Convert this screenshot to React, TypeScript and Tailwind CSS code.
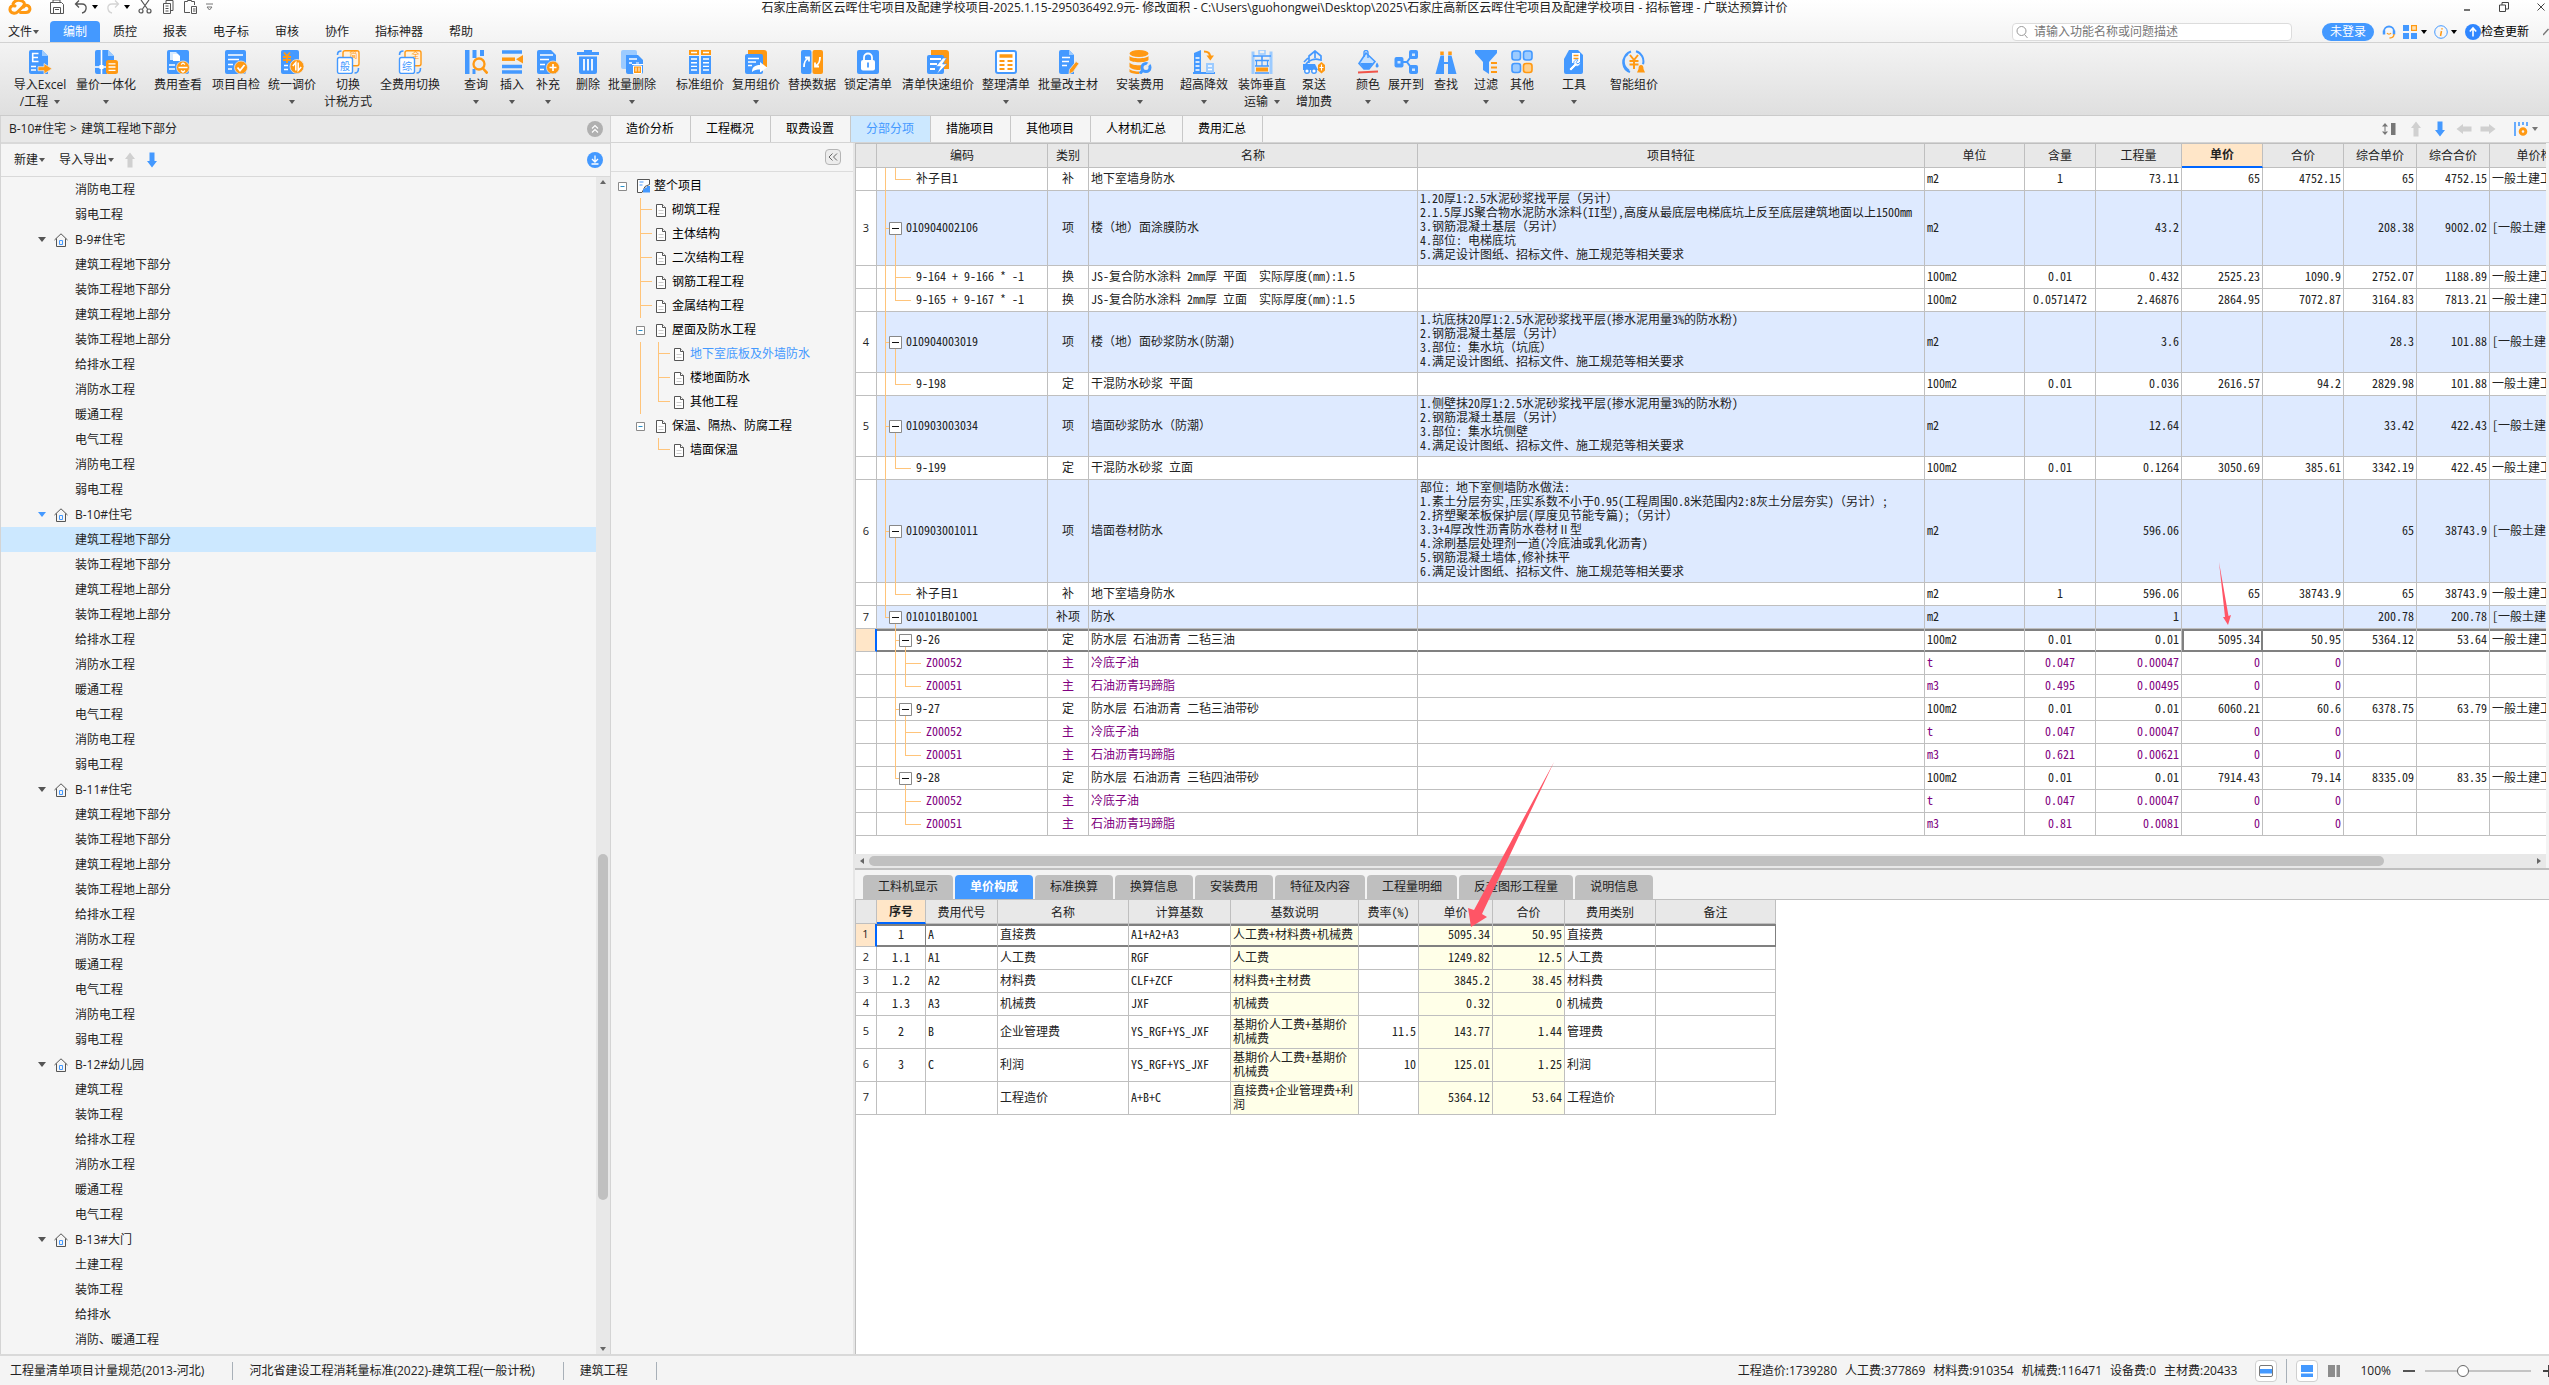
import type { ReactNode } from 'react'
import clsx from 'clsx'

const B = '#4499ff'
const O = '#ff9913'
const L = '#9ccbff'

const UI_FONT = "font-['Open_Sans','Noto_Sans_CJK_SC',sans-serif]"
const GRID_FONT = "font-['Noto_Sans_Mono_CJK_SC','Noto_Sans_CJK_SC',monospace]"

function Caret({ className = 'text-[#555]' }: { className?: string }) {
  return (
    <svg viewBox="0 0 6 4" className={clsx('w-1.5 h-1 shrink-0', className)} fill="currentColor">
      <path d="M0 0h6L3 4z" />
    </svg>
  )
}

function Arrow({ dir, color }: { dir: 'up' | 'down' | 'left' | 'right'; color: string }) {
  const rotate = { up: 0, right: 90, down: 180, left: 270 }[dir]
  return (
    <svg viewBox="0 0 16 16" className="w-4 h-4 shrink-0" fill={color}>
      <path d="M8 0.5 L13 7 H10.5 V15.5 H5.5 V7 H3z" transform={`rotate(${rotate} 8 8)`} />
    </svg>
  )
}

/* ---------- Toolbar icons ---------- */

const blueDoc = <path d="M3 0h12l5 5v19H3a2 2 0 0 1-2-2V2a2 2 0 0 1 2-2z" fill={B} />

const ICONS: Record<string, ReactNode> = {
  excel: (
    <>
      <path d="M3 0h11l6 6v18H3a2 2 0 0 1-2-2V2a2 2 0 0 1 2-2z" fill={B} />
      <path d="M14 0l6 6h-6z" fill={L} />
      <path d="M4 3.500h6.500M4 7.500h6M4 11.500h6.500M4.700 3v9" stroke="#fff" strokeWidth="1.600" />
      <path d="M3 16.500h5M3 20h5" stroke="#fff" strokeWidth="1.500" />
      <path d="M10 16.700h6v-3.200l8 5.200-8 5.200v-3.200h-6z" fill={O} stroke="#e6e6e6" strokeWidth="0.800" />
    </>
  ),
  merge: (
    <>
      <path d="M3 0h11l6 6v5h-7v13H3a2 2 0 0 1-2-2V2a2 2 0 0 1 2-2z" fill={B} />
      <path d="M14 0l6 6h-6z" fill={L} />
      <path d="M7.500 0v24M1 17h11" stroke="#fff" strokeWidth="1.600" />
      <path d="M5.500 15h4v4h-4z" fill="#fff" />
      <rect x="12" y="10" width="12" height="14" rx="2.500" fill={O} />
      <path d="M14.500 13.800h7M14.500 17h7M14.500 20.300h7" stroke="#fff" strokeWidth="1.300" />
    </>
  ),
  feeView: (
    <>
      <rect x="1" width="22" height="24" rx="2" fill={B} />
      <path d="M4 2h6l2 2v6H4z" fill="#d7eaff" />
      <path d="M7 4h5l2 2v5H7z" fill="#fff" />
      <path d="M3 15h6M3 19h6" stroke="#fff" strokeWidth="1.500" />
      <circle cx="17" cy="17.500" r="6.500" fill={O} stroke="#e6e6e6" strokeWidth="0.800" />
      <path d="M12.500 17.500h9M15 14.500l2-1.500 2 1.500M15 20.500l2 1.500 2-1.500" stroke="#fff" strokeWidth="1.400" fill="none" />
    </>
  ),
  check: (
    <>
      <rect x="1" width="21" height="24" rx="2" fill={B} />
      <path d="M4 5h15M4 9.500h11M4 14.500h5M4 19h4" stroke="#fff" strokeWidth="1.600" />
      <circle cx="17" cy="17.500" r="6.500" fill={O} stroke="#e6e6e6" strokeWidth="0.800" />
      <path d="M13.500 17.500l2.500 3 4.500-5.500" stroke="#fff" strokeWidth="1.800" fill="none" />
    </>
  ),
  adjust: (
    <>
      <rect x="1" width="18" height="24" rx="2" fill={B} />
      <path d="M4 2.500l3 3.500 3-3.500M3 7h8M3 10h8M7 6v7" stroke={O} strokeWidth="1.800" fill="none" />
      <path d="M4 15.500h4M4 19.500h4" stroke="#fff" strokeWidth="1.500" />
      <circle cx="17" cy="16.500" r="7" fill={O} stroke="#e6e6e6" strokeWidth="0.800" />
      <path d="M12.800 16l3-3.500v8M21.200 17l-3 3.500v-8" stroke="#fff" strokeWidth="1.500" fill="none" />
    </>
  ),
  switchTax: (
    <>
      <path d="M1.500 5c0-3 1-4 4-4M22.500 18c0 4-1 5-4 5" stroke={B} strokeWidth="1.600" fill="none" />
      <rect x="7" y="0.700" width="16" height="15" rx="2" fill="#fff2df" stroke={O} strokeWidth="1.400" />
      <text x="13.500" y="8" fontSize="8" fill={O}>简</text>
      <rect x="1.500" y="7.500" width="15" height="16" rx="2" fill="#fff" stroke={B} strokeWidth="1.400" />
      <text x="4" y="19.500" fontSize="10" fill={B}>般</text>
    </>
  ),
  switchFee: (
    <>
      <path d="M1.500 5c0-3 1-4 4-4M22.500 18c0 4-1 5-4 5" stroke={B} strokeWidth="1.600" fill="none" />
      <rect x="7" y="0.700" width="16" height="15" rx="2" fill="#fff2df" stroke={O} strokeWidth="1.400" />
      <text x="13.500" y="8" fontSize="8" fill={O}>全</text>
      <rect x="1.500" y="7.500" width="15" height="16" rx="2" fill="#fff" stroke={B} strokeWidth="1.400" />
      <text x="4" y="19.500" fontSize="10" fill={B}>综</text>
    </>
  ),
  query: (
    <>
      <path d="M1 0h4.500v24H1zM8.500 0h4v8h-4zM16 0h4v6h-4zM8.500 19h3v5h-3z" fill={B} />
      <circle cx="15" cy="14" r="5.500" fill="none" stroke={O} strokeWidth="2.300" />
      <path d="M19 18.500l4.500 5" stroke={O} strokeWidth="2.600" />
    </>
  ),
  insert: (
    <>
      <path d="M2 2h20M2 16.500h20M2 22h20" stroke={B} strokeWidth="3.500" />
      <path d="M2 9.200h13" stroke={O} strokeWidth="3.500" />
      <path d="M23 5v8.500l-7-4.300z" fill={O} />
    </>
  ),
  supplement: (
    <>
      {blueDoc}
      <path d="M4 5h13M4 9.500h9M4 14.500h5M4 19.500h4" stroke="#fff" strokeWidth="1.600" />
      <circle cx="17" cy="17.500" r="6.500" fill={O} stroke="#e6e6e6" strokeWidth="0.800" />
      <path d="M13.500 17.500h7M17 14v7" stroke="#fff" strokeWidth="1.700" />
    </>
  ),
  remove: (
    <>
      <path d="M1 3.500h22M8 1.500h8" stroke={B} strokeWidth="3" />
      <path d="M3 6.500h18V22a2 2 0 0 1-2 2H5a2 2 0 0 1-2-2z" fill={B} />
      <path d="M8 9v11.500M12 9v11.500M16 9v11.500" stroke="#fff" strokeWidth="1.800" />
    </>
  ),
  batchRemove: (
    <>
      <rect x="1" width="16" height="19" rx="2" fill={L} />
      <path d="M6 5h12l5 5v12a2 2 0 0 1-2 2H8a2 2 0 0 1-2-2z" fill={B} />
      <path d="M9 9h8M9 13h3" stroke="#fff" strokeWidth="1.500" />
      <path d="M12 14.500h11M13.500 16v7.500h8V16zM16 13h3" stroke="#fff" strokeWidth="1" fill={O} />
      <path d="M16 17.500v4M19 17.500v4" stroke="#fff" />
    </>
  ),
  stdPrice: (
    <>
      <path d="M1 0h10v5H1zM13 0h10v5H13z" fill={O} />
      <path d="M1 6h10v18H1zM13 6h10v18H13z" fill={B} />
      <path d="M3 2.500h6M15 2.500h6M3 9h6M3 12.700h6M3 16.400h6M3 20h6M15 9h6M15 12.700h6M15 16.400h6M15 20h6" stroke="#fff" strokeWidth="1.400" />
    </>
  ),
  reuse: (
    <>
      <path d="M4 0h16a3 3 0 0 1 3 3v14h-6V5H4z" fill={O} />
      <rect x="1" y="4" width="18" height="20" rx="2" fill={B} />
      <path d="M4 8.500h11M4 12h8M4 15.500h4" stroke="#fff" strokeWidth="1.500" />
      <path d="M8 22c0-5 3-7 8-7v-3l7 5.500-7 5v-3c-3 0-6 .5-8 2.500z" fill="#fff" />
    </>
  ),
  replace: (
    <>
      <rect x="1" width="10.500" height="24" rx="2" fill={B} />
      <rect x="12.500" width="10.500" height="24" rx="2" fill={O} />
      <path d="M4 17c0-5 1-7 4.500-9M5 7.500h4v4" stroke="#fff" strokeWidth="1.800" fill="none" />
      <path d="M20 7c0 5-1 7-4.500 9M19 16.500h-4v-4" stroke="#fff" strokeWidth="1.800" fill="none" />
    </>
  ),
  lock: (
    <>
      <rect x="1" width="22" height="24" rx="2" fill={B} />
      <rect x="5" y="10" width="14" height="10.500" rx="2" fill="#fff" />
      <path d="M8 10V7.500a4 4 0 0 1 8 0V10" stroke="#fff" strokeWidth="1.800" fill="none" />
      <path d="M12 12.500v5" stroke={B} strokeWidth="1.800" />
    </>
  ),
  fast: (
    <>
      <path d="M5 0h15a3 3 0 0 1 3 3v16h-6V5H5z" fill={O} />
      <rect x="1" y="5" width="17" height="19" rx="2" fill={B} />
      <path d="M4 9h11M4 14h7M4 19h5" stroke="#fff" strokeWidth="1.800" />
      <path d="M17 8l-7 8.500h4.500L11 24l10-10h-4.500l4-6z" fill="#fff" stroke={B} strokeWidth="0.600" />
    </>
  ),
  arrange: (
    <>
      <rect x="2" y="1" width="20" height="22" rx="2" fill="#fff" stroke={B} strokeWidth="2" />
      <path d="M5.500 6h13" stroke={O} strokeWidth="3.500" />
      <path d="M5.500 11h5M13.500 11h5M5.500 15h5M13.500 15h5M5.500 19h5M13.500 19h5" stroke={O} strokeWidth="2" />
    </>
  ),
  batchMain: (
    <>
      <path d="M5 0h8l5 5v19H5a2 2 0 0 1-2-2V2a2 2 0 0 1 2-2z" fill={B} />
      <path d="M13 0l5 5h-5z" fill={L} />
      <path d="M6 7.500h8M6 11.500h7M6 15.500h5" stroke="#fff" strokeWidth="1.600" />
      <path d="M20 11.500l3 2-6 8.500-4 2 .5-4.500z" fill={O} stroke="#e6e6e6" strokeWidth="0.800" />
    </>
  ),
  install: (
    <>
      <ellipse cx="11" cy="3.500" rx="9.500" ry="3.500" fill={O} />
      <path d="M1.500 6c2 3 17 3 19 0v4c-2 3-17 3-19 0zM1.500 12.500c2 3 10 3 12 2.500l-1 5c-4 0-9-.5-11-3zM1.500 19c2 2 7 2.500 10 2.500v2.500c-4 0-8-.5-10-2z" fill={O} />
      <circle cx="18" cy="17.500" r="4" fill="none" stroke={B} strokeWidth="3" />
      <path d="M18 17l4-4.500" stroke="#e8e8e8" strokeWidth="2.500" />
      <path d="M15 20l-3 3.500" stroke={B} strokeWidth="3" />
    </>
  ),
  height: (
    <>
      <path d="M2 3l7-3v24H2z" fill={B} />
      <path d="M3.500 8h4M3.500 12h4M3.500 16h4M3.500 20h4" stroke="#fff" strokeWidth="1.400" />
      <path d="M1 23h22" stroke={B} strokeWidth="2" />
      <path d="M14 13h8v10h-8z" fill={L} />
      <path d="M16 16h4M16 19.500h4" stroke="#fff" strokeWidth="1.400" />
      <path d="M12 1.500c4 0 6 1 6 5" stroke={O} strokeWidth="2.200" fill="none" />
      <path d="M14.500 5.500h7.500l-3.700 5z" fill={O} />
    </>
  ),
  vertical: (
    <>
      <path d="M3 1.500v22.500M21 1.500v22.500" stroke={L} strokeWidth="3" />
      <path d="M9 0h6v4H9z" fill="none" stroke={L} strokeWidth="1.500" />
      <path d="M3 6h18M12 6v4M5 10.500h14M5 16h14" stroke={B} strokeWidth="1.600" />
      <path d="M6.500 10v6M12 10v6M17.500 10v6" stroke={B} strokeWidth="1.200" />
      <path d="M6 17.500h12v4H6z" fill={O} />
      <path d="M5 23h14" stroke={B} strokeWidth="1.500" />
    </>
  ),
  pump: (
    <>
      <path d="M7 13V6l6-5 6 5v5M13 1v7M4 14c3-4 9-6 14-4M2 12l4-4" stroke={B} strokeWidth="1.700" fill="none" />
      <path d="M1 14h12l3 6H1z" fill={B} />
      <circle cx="5" cy="21" r="2.300" fill="#fff" stroke={B} strokeWidth="1.400" />
      <circle cx="12" cy="21" r="2.300" fill="#fff" stroke={B} strokeWidth="1.400" />
      <path d="M19.500 12l3.500 3v5.500l-3.500 3-3.500-3V15z" fill={O} />
      <path d="M19.500 14.500v6M17.500 17.500h4" stroke="#fff" strokeWidth="1.100" />
    </>
  ),
  color: (
    <>
      <path d="M10 3l9 8.500-6 7.500H8l-5-5.500z" fill="#c5e1ff" stroke={B} strokeWidth="1.600" />
      <path d="M4 13h13l-4.500 6H8z" fill={B} />
      <path d="M8 7V2.500a2 2 0 0 1 4 0V8" stroke={B} strokeWidth="1.400" fill="none" />
      <path d="M21 12.500c3 4 1 5 0 5s-2.500-1 0-5z" fill={B} />
      <path d="M2 22.500l20-1" stroke="#f0554a" strokeWidth="1.800" />
    </>
  ),
  expand: (
    <>
      <path d="M8 12h6M19 4l-6 8 6 8" stroke={B} strokeWidth="2" fill="none" />
      <rect x="0.500" y="7" width="9" height="10.500" rx="2" fill={B} />
      <rect x="15" y="0" width="9" height="9" rx="2" fill={B} />
      <rect x="15" y="15" width="9" height="9" rx="2" fill={B} />
      <path d="M3.500 11h3v2.500h-3zM18 3.500h3v2.500h-3zM18 18.500h3v2.500h-3z" fill="#cfe6ff" />
    </>
  ),
  find: (
    <>
      <path d="M8 1.500v3.500M16 1.500v3.500" stroke={O} strokeWidth="3.500" />
      <path d="M6.500 5.500h3.500V24H1.500zM14 5.500h3.500L22.500 24H14z" fill={B} />
      <path d="M10 12h4v2h-4z" fill={B} />
    </>
  ),
  filter: (
    <>
      <path d="M1 0h22v3l-8 9v12l-6-4v-8L1 3z" fill={B} />
      <path d="M17 13h6M17 17.500h6M17 22h6" stroke={O} strokeWidth="2" />
    </>
  ),
  other: (
    <>
      <rect x="2" y="1" width="8.500" height="9" rx="2.500" fill={L} stroke={B} strokeWidth="1.600" />
      <rect x="13.500" y="1" width="8.500" height="9" rx="2.500" fill={L} stroke={B} strokeWidth="1.600" />
      <rect x="2" y="13.500" width="8.500" height="9" rx="2.500" fill={L} stroke={B} strokeWidth="1.600" />
      <rect x="13.500" y="13.500" width="8.500" height="9" rx="2.500" fill="#ffd08c" stroke={O} strokeWidth="1.600" />
    </>
  ),
  tool: (
    <>
      <path d="M7 0h9l5 5v17a2 2 0 0 1-2 2H4a2 2 0 0 1-2-2V9z" fill={B} />
      <path d="M10 3h8v10h-8z" fill="#fff" />
      <path d="M11.500 5.500h5M11.500 8.500h5" stroke={O} strokeWidth="1.400" />
      <path d="M7 19l5-5c-1-3 2-5 4-4l-2 2.500 2 1.500 2-2c1 3-2 5-4 4l-5 5z" fill="#fff" stroke={B} strokeWidth="0.800" />
    </>
  ),
  smart: (
    <>
      <path d="M9 1.500a10.500 10.500 0 0 0-2 19M14 1.200a10.500 10.500 0 0 1 7 13M6 4a10 10 0 0 0 2 18" stroke={B} strokeWidth="2" fill="none" />
      <path d="M8 5l4 5 4-5M7.500 11h9M7.500 14.500h9M12 10v9" stroke={O} strokeWidth="2" fill="none" />
      <path d="M19 15c2 0 2.500 2 2.500 4l1.500 3.500h-8l1.500-3.500c0-2 .5-4 2.500-4z" fill={O} />
    </>
  ),
}

interface Tool {
  icon: string
  label: string
  second?: string
  caret?: boolean
  box: string
}

const TOOLS: Tool[] = [
  { icon: 'excel', label: '导入Excel', second: '/工程', caret: true, box: 'w-14' },
  { icon: 'merge', label: '量价一体化', caret: true, box: 'ml-2 w-15' },
  { icon: 'feeView', label: '费用查看', box: 'ml-[18px] w-12' },
  { icon: 'check', label: '项目自检', box: 'ml-[10px] w-12' },
  { icon: 'adjust', label: '统一调价', caret: true, box: 'ml-2 w-12' },
  { icon: 'switchTax', label: '切换', second: '计税方式', box: 'ml-2 w-12' },
  { icon: 'switchFee', label: '全费用切换', box: 'ml-2 w-15' },
  { icon: 'query', label: '查询', caret: true, box: 'ml-6 w-6' },
  { icon: 'insert', label: '插入', caret: true, box: 'ml-3 w-6' },
  { icon: 'supplement', label: '补充', caret: true, box: 'ml-3 w-6' },
  { icon: 'remove', label: '删除', box: 'ml-4 w-6' },
  { icon: 'batchRemove', label: '批量删除', caret: true, box: 'ml-2 w-12' },
  { icon: 'stdPrice', label: '标准组价', box: 'ml-5 w-12' },
  { icon: 'reuse', label: '复用组价', caret: true, box: 'ml-2 w-12' },
  { icon: 'replace', label: '替换数据', box: 'ml-2 w-12' },
  { icon: 'lock', label: '锁定清单', box: 'ml-2 w-12' },
  { icon: 'fast', label: '清单快速组价', box: 'ml-[10px] w-18' },
  { icon: 'arrange', label: '整理清单', caret: true, box: 'ml-2 w-12' },
  { icon: 'batchMain', label: '批量改主材', box: 'ml-2 w-15' },
  { icon: 'install', label: '安装费用', caret: true, box: 'ml-[18px] w-12' },
  { icon: 'height', label: '超高降效', caret: true, box: 'ml-4 w-12' },
  { icon: 'vertical', label: '装饰垂直', second: '运输', caret: true, box: 'ml-[10px] w-12' },
  { icon: 'pump', label: '泵送', second: '增加费', box: 'ml-[10px] w-9' },
  { icon: 'color', label: '颜色', caret: true, box: 'ml-6 w-6' },
  { icon: 'expand', label: '展开到', caret: true, box: 'ml-2 w-9' },
  { icon: 'find', label: '查找', box: 'ml-[10px] w-6' },
  { icon: 'filter', label: '过滤', caret: true, box: 'ml-4 w-6' },
  { icon: 'other', label: '其他', caret: true, box: 'ml-3 w-6' },
  { icon: 'tool', label: '工具', caret: true, box: 'ml-7 w-6' },
  { icon: 'smart', label: '智能组价', box: 'ml-6 w-12' },
]

function Toolbar() {
  return (
    <div className="flex h-[73px] shrink-0 items-start border-b border-[#cbcbcb] bg-linear-to-b from-[#f3f3f3] to-[#dfdfdf] pl-3 pt-[7px]">
      {TOOLS.map(t => (
        <button key={t.icon} className={clsx('flex shrink-0 flex-col items-center whitespace-nowrap', t.box)}>
          <svg viewBox="0 0 24 24" className="h-6 w-6">{ICONS[t.icon]}</svg>
          <span className="mt-[2px] leading-[18px]">{t.label}</span>
          <span className="flex h-4 items-center gap-1.5 leading-4">
            {t.second}
            {t.caret && <Caret />}
          </span>
        </button>
      ))}
    </div>
  )
}

/* ---------- Title bar and menu ---------- */

function TitleBar() {
  return (
    <div className="flex h-[21px] shrink-0 items-start">
      <div className="flex h-[14px] w-[600px] items-center pl-2 text-[#555]">
        <svg viewBox="0 0 24 15" className="h-[15px] w-6" fill="none" stroke="#ff9913" strokeWidth="3" strokeLinecap="round">
          <path d="M5 4C6 1 10-1 14 1c3 1.500 3 3 1 5.500L9.500 12c-2 2-7 1.500-7.500-2S4.500 5 7 6" />
          <path d="M12.500 12.500h5.500c4 0 5-4.500 2.500-6.500-1.500-1-3.500-1-5 1" />
        </svg>
        <svg viewBox="0 0 14 14" className="ml-[18px] h-[14px] w-[14px]" fill="none" stroke="currentColor">
          <path d="M.5 2.500h11l2 2v9H.5zM3 2.500V0h7v2.500M3.500 13.500v-6h7v6M5 9.500h4" />
        </svg>
        <svg viewBox="0 0 14 14" className="ml-[10px] h-[14px] w-[14px]" fill="none" stroke="currentColor" strokeWidth="1.300">
          <path d="M5 .5L1.500 4 5 7.500M1.500 4H8c6 0 5 8 0 9" />
        </svg>
        <Caret className="ml-1 text-black" />
        <svg viewBox="0 0 14 14" className="ml-[8px] h-[14px] w-[14px]" fill="none" stroke="#d4d4d4" strokeWidth="1.300">
          <path d="M9 .5L12.500 4 9 7.500M12.500 4H6c-6 0-5 8 0 9" />
        </svg>
        <Caret className="ml-1 text-black" />
        <svg viewBox="0 0 14 14" className="ml-[8px] h-[14px] w-[14px]" fill="none" stroke="currentColor" strokeWidth="1.200">
          <path d="M3 0l6.500 9M11 0L4.500 9" />
          <circle cx="3" cy="11" r="2" />
          <circle cx="11" cy="11" r="2" />
        </svg>
        <svg viewBox="0 0 14 14" className="ml-[9px] h-[14px] w-[14px]" fill="none" stroke="currentColor">
          <path d="M2.500 3.500h7v10h-7zM5 3V.5h7v10h-2.500M4.500 6h3M4.500 8.500h3M4.500 11h3" />
        </svg>
        <svg viewBox="0 0 14 14" className="ml-[9px] h-[14px] w-[14px]" fill="none" stroke="currentColor">
          <path d="M6 12.500H.5v-11h3V.5h4v1h3V5M7.500 6.500h5v7h-5zM9 9h2.500M9 11h2.500" />
        </svg>
        <svg viewBox="0 0 7 8" className="ml-[8px] h-2 w-[7px]" fill="none" stroke="#777">
          <path d="M0 1h7M1 4h5L3.500 7z" />
        </svg>
      </div>
      <div className="flex-1 text-center leading-[16px]">
        石家庄高新区云晖住宅项目及配建学校项目-2025.1.15-295036492.9元- 修改面积 - C:\Users\guohongwei\Desktop\2025\石家庄高新区云晖住宅项目及配建学校项目 - 招标管理 - 广联达预算计价
      </div>
      <div className="flex h-[14px] w-[600px] items-center justify-end gap-7 pr-1 text-[#444]">
        <svg viewBox="0 0 8 10" className="h-[10px] w-2"><path d="M1 8h6" stroke="currentColor" strokeWidth="1.500" /></svg>
        <svg viewBox="0 0 10 10" className="h-[10px] w-[10px]" fill="none" stroke="currentColor">
          <path d="M.5 3h6v6.500h-6zM3 3V.5h6.500V7H6.500" />
        </svg>
        <svg viewBox="0 0 8 8" className="h-2 w-2" stroke="currentColor"><path d="M.5.5l7 7M7.500.5l-7 7" /></svg>
      </div>
    </div>
  )
}

const MENU = ['编制', '质控', '报表', '电子标', '审核', '协作', '指标神器', '帮助']

function MenuBar() {
  return (
    <div className="flex h-[22px] shrink-0 items-center border-b border-[#d2d2d2]">
      <button className="flex w-[50px] items-center gap-px pl-2">
        文件
        <Caret />
      </button>
      {MENU.map((m, i) => (
        <button
          key={m}
          className={clsx('h-full px-[13px]', i === 0 && 'rounded-t-sm bg-[#4499ff] text-white')}
        >
          {m}
        </button>
      ))}
      <div className="ml-auto flex h-full items-center text-black">
        <label className="flex h-[18px] w-[280px] items-center gap-1.5 rounded-sm border border-[#dcdcdc] bg-white px-[3px]">
          <svg viewBox="0 0 12 12" className="h-3 w-3 shrink-0" fill="none" stroke="#999">
            <circle cx="5.500" cy="5" r="4.500" />
            <path d="M8.500 8.500L11.500 12" />
          </svg>
          <input className="w-full bg-transparent text-xs leading-4 outline-none placeholder:text-[#777]" placeholder="请输入功能名称或问题描述" aria-label="搜索" />
        </label>
        <button className="ml-[30px] h-[18px] w-[52px] rounded-full bg-[#4499ff] leading-[18px] text-white">未登录</button>
        <svg viewBox="0 0 14 14" className="ml-2 h-[14px] w-[14px]" fill="none" strokeWidth="1.800">
          <path d="M2 8V6.500a5 5 0 0 1 10 0V8" stroke={B} />
          <path d="M2 5.500v4M12 5.500v4" stroke={B} strokeWidth="2.500" />
          <path d="M12 9c0 3-2 4-4.500 4M5 8c1 1.500 3 1.500 4 0" stroke={O} strokeWidth="1.300" />
        </svg>
        <svg viewBox="0 0 14 14" className="ml-[7px] h-[14px] w-[14px]">
          <path d="M0 0h6v6H0zM0 8h6v6H0zM8 8h6v6H8z" fill={B} />
          <rect x="8.600" y="0.600" width="4.800" height="4.800" fill="#ffe0b0" stroke={O} strokeWidth="1.200" />
        </svg>
        <Caret className="ml-1 text-black" />
        <svg viewBox="0 0 14 14" className="ml-[7px] h-[14px] w-[14px]" fill="none">
          <circle cx="7" cy="7" r="6.300" stroke={B} />
          <path d="M7.500 6L6.500 11M8 3.200v1.300" stroke={O} strokeWidth="1.500" />
        </svg>
        <Caret className="ml-[3px] text-black" />
        <button className="ml-2 flex items-center">
          <svg viewBox="0 0 16 16" className="h-4 w-4">
            <circle cx="8" cy="8" r="8" fill="#2f86ff" />
            <path d="M8 12.500V4.500M4.800 7.500L8 4l3.200 3.500" stroke="#fff" strokeWidth="1.600" fill="none" />
          </svg>
          检查更新
        </button>
        <svg viewBox="0 0 6 8" className="ml-[14px] h-2 w-1.5" fill="none" stroke="#777"><path d="M0 7l5.500-6" strokeWidth="1.500" /></svg>
      </div>
    </div>
  )
}

/* ---------- Project tree ---------- */

const FULL = ['建筑工程地下部分', '装饰工程地下部分', '建筑工程地上部分', '装饰工程地上部分', '给排水工程', '消防水工程', '暖通工程', '电气工程', '消防电工程', '弱电工程']

const PROJECTS: { name?: string; active?: boolean; children: string[] }[] = [
  { children: ['消防电工程', '弱电工程'] },
  { name: 'B-9#住宅', children: FULL },
  { name: 'B-10#住宅', active: true, children: FULL },
  { name: 'B-11#住宅', children: FULL },
  { name: 'B-12#幼儿园', children: ['建筑工程', '装饰工程', '给排水工程', '消防水工程', '暖通工程', '电气工程'] },
  { name: 'B-13#大门', children: ['土建工程', '装饰工程', '给排水', '消防、暖通工程'] },
]

function ProjectTree() {
  return (
    <div className="flex min-h-0 flex-1">
      <ul className="flex-1 overflow-hidden">
        {PROJECTS.map((p, i) => (
          <li key={i}>
            {p.name && (
              <div className="flex h-[25px] items-center pl-[37px]">
                <svg viewBox="0 0 8 5" className="h-[5px] w-2" fill={p.active ? B : '#555'}><path d="M0 0h8L4 5z" /></svg>
                <svg viewBox="0 0 14 14" className="ml-2 mr-[7px] h-[14px] w-[14px]" fill="none" stroke="#555">
                  <path d="M.5 7L7 .8 13.500 7M2.500 5.500v8h9v-8" />
                  <path d="M5.500 7.500h3v4h-3z" stroke={B} />
                </svg>
                {p.name}
              </div>
            )}
            <ul>
              {p.children.map((c, j) => (
                <li key={c} className={clsx('h-[25px] pl-[74px] leading-[25px]', p.active && j === 0 && 'bg-[#cce8ff]')}>
                  {c}
                </li>
              ))}
            </ul>
          </li>
        ))}
      </ul>
      <div className="flex w-[14px] flex-col items-center bg-[#e8e8e8] py-[3px] text-[#666]">
        <Caret className="rotate-180" />
        <div className="mt-[670px] h-[346px] w-[10px] rounded-full bg-[#c0c0c0]" />
        <Caret className="mt-auto" />
      </div>
    </div>
  )
}

function LeftPanel() {
  return (
    <aside className="flex w-[611px] shrink-0 flex-col border-x border-[#d4d4d4] bg-[#f5f5f5]">
      <div className="flex h-[28px] shrink-0 items-center justify-between border-b-2 border-[#d9d9d9] bg-[#e8e8e8] pl-2 pr-[7px]">
        <span className="flex gap-1">
          <span>B-10#住宅</span>
          <span>&gt;</span>
          <span>建筑工程地下部分</span>
        </span>
        <svg viewBox="0 0 16 16" className="h-4 w-4" fill="none" stroke="#fff" strokeWidth="1.100">
          <circle cx="8" cy="8" r="8" fill="#b0b0b0" stroke="none" />
          <path d="M5 7.500L8 4.500l3 3M5 11.500l3-3 3 3" />
        </svg>
      </div>
      <div className="flex h-[33px] shrink-0 items-center border-b border-[#d9d9d9] pl-[13px] pr-[7px]">
        <button className="flex items-center gap-px">新建<Caret /></button>
        <button className="ml-[14px] flex items-center gap-px">导入导出<Caret /></button>
        <div className="ml-2 flex items-center gap-1.5">
          <Arrow dir="up" color="#d0d0d0" />
          <Arrow dir="down" color={B} />
        </div>
        <svg viewBox="0 0 16 16" className="ml-auto h-4 w-4" fill="none" stroke="#fff" strokeWidth="1.300">
          <circle cx="8" cy="8" r="8" fill={B} stroke="none" />
          <path d="M8 3.500v6M5 7l3 3 3-3M4.500 12h7" />
        </svg>
      </div>
      <ProjectTree />
    </aside>
  )
}

/* ---------- Section tree ---------- */

interface Section {
  name: string
  depth: number
  open?: boolean
  last?: boolean
  rail?: boolean
  active?: boolean
}

const SECTIONS: Section[] = [
  { name: '砌筑工程', depth: 1 },
  { name: '主体结构', depth: 1 },
  { name: '二次结构工程', depth: 1 },
  { name: '钢筋工程工程', depth: 1 },
  { name: '金属结构工程', depth: 1 },
  { name: '屋面及防水工程', depth: 1, open: true },
  { name: '地下室底板及外墙防水', depth: 2, rail: true, active: true },
  { name: '楼地面防水', depth: 2, rail: true },
  { name: '其他工程', depth: 2, rail: true, last: true },
  { name: '保温、隔热、防腐工程', depth: 1, open: true },
  { name: '墙面保温', depth: 2, last: true },
]

function SmallMinus() {
  return (
    <svg viewBox="0 0 9 9" className="h-[9px] w-[9px] shrink-0" fill="#fff" stroke="#8a8a8a">
      <path d="M.5.5h8v8h-8z" />
      <path d="M2.500 4.500h4" stroke="#2a90c8" />
    </svg>
  )
}

function Rail({ stub, last }: { stub?: boolean; last?: boolean }) {
  return (
    <svg viewBox="0 0 18 24" className="h-6 w-[18px] shrink-0" stroke="#ffc47a" fill="none">
      <path d={last ? 'M4.500 0v12' : 'M4.500 0v24'} />
      {stub && <path d="M4 11.500H16" />}
    </svg>
  )
}

function DocIcon() {
  return (
    <svg viewBox="0 0 10 13" className="mr-[6px] h-[13px] w-[10px] shrink-0" fill="#fff" stroke="#555">
      <path d="M.5.5h6l3 3v9h-9z" />
      <path d="M6.500.5v3h3" />
      <path d="M2.500 6.500h5M2.500 9.500h5" stroke="#ccc" />
    </svg>
  )
}

function SectionPanel() {
  return (
    <aside className="flex w-[244px] shrink-0 flex-col border-r-2 border-[#e6e6e6] bg-[#f5f5f5]">
      <div className="flex h-[29px] shrink-0 items-center justify-end border-b border-[#dcdcdc] pr-3">
        <button aria-label="收起" className="flex h-4 w-4 items-center justify-center rounded-sm border border-[#b5b5b5] bg-[#ececec]">
          <svg viewBox="0 0 10 8" className="h-2 w-[10px]" fill="none" stroke="#666"><path d="M4.500.5L1 4l3.500 3.500M9 .5L5.500 4 9 7.500" /></svg>
        </button>
      </div>
      <ul className="pl-[7px] pt-[2px] text-black">
        <li className="flex h-6 items-center">
          <SmallMinus />
          <svg viewBox="0 0 13 14" className="ml-[10px] mr-1 h-[14px] w-[13px]" fill="#fff" stroke="#555">
            <path d="M.5.5h12v5L8 7.500l-3 6H.5z" />
            <path d="M2.500 3h4M2.500 6h3" stroke={B} />
            <path d="M6 13V10h2V8.500h2V7h3v6.500H6z" fill={B} stroke="none" />
          </svg>
          整个项目
        </li>
        {SECTIONS.map(s => (
          <li key={s.name} className={clsx('flex h-6 items-center pl-[18px]', s.active && 'text-[#4499ff]')}>
            {s.depth === 2 && (s.rail ? <Rail /> : <span className="w-[18px]" />)}
            <span className="flex w-[20px]">{s.open ? <SmallMinus /> : <Rail stub last={s.last} />}</span>
            <DocIcon />
            {s.name}
          </li>
        ))}
      </ul>
    </aside>
  )
}

/* ---------- Bill of quantities grid ---------- */

type Kind = 'bill' | 'quota' | 'material'

interface Row {
  no?: string
  code: string
  type: string
  name: string
  feature?: string[]
  unit: string
  nums: [string, string, string, string, string, string]
  tpl?: string
  kind: Kind
  /* guide columns that run straight through the row */
  through: number[]
  /* guide column that the row's own stub hangs on */
  stem: number
  last?: boolean
  open?: boolean
  selected?: boolean
}

const TPL = '一般土建工程'

const ROWS: Row[] = [
  { code: '补子目1', type: '补', name: '地下室墙身防水', unit: 'm2', nums: ['1', '73.11', '65', '4752.15', '65', '4752.15'], tpl: TPL, kind: 'quota', through: [0], stem: 1, last: true },
  {
    no: '3', code: '010904002106', type: '项', name: '楼（地）面涂膜防水',
    feature: ['1.20厚1:2.5水泥砂浆找平层（另计）', '2.1.5厚JS聚合物水泥防水涂料(II型),高度从最底层电梯底坑上反至底层建筑地面以上1500mm', '3.钢筋混凝土基层（另计）', '4.部位: 电梯底坑', '5.满足设计图纸、招标文件、施工规范等相关要求'],
    unit: 'm2', nums: ['', '43.2', '', '', '208.38', '9002.02'], tpl: `[${TPL}]`, kind: 'bill', through: [], stem: 0, open: true,
  },
  { code: '9-164 + 9-166 * -1', type: '换', name: 'JS-复合防水涂料 2mm厚 平面  实际厚度(mm):1.5', unit: '100m2', nums: ['0.01', '0.432', '2525.23', '1090.9', '2752.07', '1188.89'], tpl: TPL, kind: 'quota', through: [0], stem: 1 },
  { code: '9-165 + 9-167 * -1', type: '换', name: 'JS-复合防水涂料 2mm厚 立面  实际厚度(mm):1.5', unit: '100m2', nums: ['0.0571472', '2.46876', '2864.95', '7072.87', '3164.83', '7813.21'], tpl: TPL, kind: 'quota', through: [0], stem: 1, last: true },
  {
    no: '4', code: '010904003019', type: '项', name: '楼（地）面砂浆防水(防潮)',
    feature: ['1.坑底抹20厚1:2.5水泥砂浆找平层(掺水泥用量3%的防水粉)', '2.钢筋混凝土基层（另计）', '3.部位: 集水坑（坑底）', '4.满足设计图纸、招标文件、施工规范等相关要求'],
    unit: 'm2', nums: ['', '3.6', '', '', '28.3', '101.88'], tpl: `[${TPL}]`, kind: 'bill', through: [], stem: 0, open: true,
  },
  { code: '9-198', type: '定', name: '干混防水砂浆 平面', unit: '100m2', nums: ['0.01', '0.036', '2616.57', '94.2', '2829.98', '101.88'], tpl: TPL, kind: 'quota', through: [0], stem: 1, last: true },
  {
    no: '5', code: '010903003034', type: '项', name: '墙面砂浆防水（防潮）',
    feature: ['1.侧壁抹20厚1:2.5水泥砂浆找平层(掺水泥用量3%的防水粉)', '2.钢筋混凝土基层（另计）', '3.部位: 集水坑侧壁', '4.满足设计图纸、招标文件、施工规范等相关要求'],
    unit: 'm2', nums: ['', '12.64', '', '', '33.42', '422.43'], tpl: `[${TPL}]`, kind: 'bill', through: [], stem: 0, open: true,
  },
  { code: '9-199', type: '定', name: '干混防水砂浆 立面', unit: '100m2', nums: ['0.01', '0.1264', '3050.69', '385.61', '3342.19', '422.45'], tpl: TPL, kind: 'quota', through: [0], stem: 1, last: true },
  {
    no: '6', code: '010903001011', type: '项', name: '墙面卷材防水',
    feature: ['部位: 地下室侧墙防水做法:', '1.素土分层夯实,压实系数不小于0.95(工程周围0.8米范围内2:8灰土分层夯实)（另计）;', '2.挤塑聚苯板保护层(厚度见节能专篇);（另计）', '3.3+4厚改性沥青防水卷材Ⅱ型', '4.涂刷基层处理剂一道(冷底油或乳化沥青)', '5.钢筋混凝土墙体,修补抹平', '6.满足设计图纸、招标文件、施工规范等相关要求'],
    unit: 'm2', nums: ['', '596.06', '', '', '65', '38743.9'], tpl: `[${TPL}]`, kind: 'bill', through: [], stem: 0, open: true,
  },
  { code: '补子目1', type: '补', name: '地下室墙身防水', unit: 'm2', nums: ['1', '596.06', '65', '38743.9', '65', '38743.9'], tpl: TPL, kind: 'quota', through: [0], stem: 1, last: true },
  { no: '7', code: '010101B01001', type: '补项', name: '防水', unit: 'm2', nums: ['', '1', '', '', '200.78', '200.78'], tpl: `[${TPL}]`, kind: 'bill', through: [], stem: 0, last: true, open: true },
  { code: '9-26', type: '定', name: '防水层 石油沥青 二毡三油', unit: '100m2', nums: ['0.01', '0.01', '5095.34', '50.95', '5364.12', '53.64'], tpl: TPL, kind: 'quota', through: [], stem: 1, open: true, selected: true },
  { code: 'Z00052', type: '主', name: '冷底子油', unit: 't', nums: ['0.047', '0.00047', '0', '0', '', ''], kind: 'material', through: [1], stem: 2 },
  { code: 'Z00051', type: '主', name: '石油沥青玛蹄脂', unit: 'm3', nums: ['0.495', '0.00495', '0', '0', '', ''], kind: 'material', through: [1], stem: 2, last: true },
  { code: '9-27', type: '定', name: '防水层 石油沥青 二毡三油带砂', unit: '100m2', nums: ['0.01', '0.01', '6060.21', '60.6', '6378.75', '63.79'], tpl: TPL, kind: 'quota', through: [], stem: 1, open: true },
  { code: 'Z00052', type: '主', name: '冷底子油', unit: 't', nums: ['0.047', '0.00047', '0', '0', '', ''], kind: 'material', through: [1], stem: 2 },
  { code: 'Z00051', type: '主', name: '石油沥青玛蹄脂', unit: 'm3', nums: ['0.621', '0.00621', '0', '0', '', ''], kind: 'material', through: [1], stem: 2, last: true },
  { code: '9-28', type: '定', name: '防水层 石油沥青 三毡四油带砂', unit: '100m2', nums: ['0.01', '0.01', '7914.43', '79.14', '8335.09', '83.35'], tpl: TPL, kind: 'quota', through: [], stem: 1, last: true, open: true },
  { code: 'Z00052', type: '主', name: '冷底子油', unit: 't', nums: ['0.047', '0.00047', '0', '0', '', ''], kind: 'material', through: [], stem: 2 },
  { code: 'Z00051', type: '主', name: '石油沥青玛蹄脂', unit: 'm3', nums: ['0.81', '0.0081', '0', '0', '', ''], kind: 'material', through: [], stem: 2, last: true },
]

const GUIDE_LEFT = ['left-[8px]', 'left-[18px]', 'left-[28px]']
const CODE_PAD: Record<Kind, string> = { bill: 'pl-[29px]', quota: 'pl-[39px]', material: 'pl-[49px]' }

function CodeCell({ row, className }: { row: Row; className: string }) {
  return (
    <td className={clsx('relative', CODE_PAD[row.kind], className)}>
      {row.through.map(g => (
        <span key={g} className={clsx('absolute -bottom-px top-0 w-px bg-[#ffc47a]', GUIDE_LEFT[g])} />
      ))}
      <span className={clsx('absolute top-0 w-px bg-[#ffc47a]', GUIDE_LEFT[row.stem], row.last ? 'bottom-1/2' : '-bottom-px')} />
      <span className={clsx('absolute top-1/2 h-px w-4 bg-[#ffc47a]', GUIDE_LEFT[row.stem])} />
      {row.open && (
        <>
          <span className={clsx('absolute -bottom-px top-1/2 w-px bg-[#ffc47a]', GUIDE_LEFT[row.stem + 1])} />
          <svg
            viewBox="0 0 13 13"
            className={clsx('absolute top-1/2 -mt-1.5 h-[13px] w-[13px]', row.stem === 0 ? 'left-3' : 'left-[22px]')}
            fill="#fff"
            stroke="#888"
          >
            <path d="M.5.5h12v12H.5z" />
            <path d="M3 6.500h7" stroke="#111" />
          </svg>
        </>
      )}
      {row.code}
    </td>
  )
}

const MAIN_COLS = ['w-[21px]', 'w-[171px]', 'w-[41px]', 'w-[329px]', 'w-[507px]', 'w-[100px]', 'w-[71px]', 'w-[86px]', 'w-[81px]', 'w-[81px]', 'w-[73px]', 'w-[73px]', 'w-[126px]']
const MAIN_HEAD = ['', '编码', '类别', '名称', '项目特征', '单位', '含量', '工程量', '单价', '合价', '综合单价', '综合合价', '单价构成文件']

function HeadCell({ label, active, height }: { label: string; active: boolean; height: string }) {
  return (
    <th
      className={clsx(
        'border-r border-[#bfbfbf] p-0 text-center leading-[18px]',
        height,
        active ? 'border-b-2 border-b-[#0066ff] bg-[#ffe6c8] font-bold' : 'border-b bg-[#e8e8e8] font-normal',
      )}
    >
      {label}
    </th>
  )
}

function MainGrid() {
  return (
    <div className="mr-[3px] h-[711px] shrink-0 overflow-hidden border-l border-t border-[#bfbfbf] bg-white">
      <table className={clsx('w-[1760px] table-fixed border-separate border-spacing-0', GRID_FONT)}>
        <colgroup>
          {MAIN_COLS.map((c, i) => <col key={i} className={c} />)}
        </colgroup>
        <thead className={UI_FONT}>
          <tr>
            {MAIN_HEAD.map((h, i) => <HeadCell key={i} label={h} active={h === '单价'} height="h-6" />)}
          </tr>
        </thead>
        <tbody className="leading-[14px]">
          {ROWS.map((r, i) => {
            const cell = clsx(
              'h-[23px] whitespace-pre border-b border-r pt-0',
              r.selected
                ? 'border-b-[#808080] border-r-[#bfbfbf] shadow-[inset_0_2px_#808080,inset_0_-1px_#808080]'
                : 'border-[#bfbfbf]',
              r.kind === 'bill' && 'bg-[#deeaff]',
              r.kind === 'material' && 'text-[#800080]',
            )
            const padded = clsx(cell, 'px-[2px] pb-[2px]')
            return (
              <tr key={i}>
                <td
                  className={clsx(
                    'border-b border-r border-[#bfbfbf] p-0 text-center text-[11px]',
                    UI_FONT,
                    r.selected && 'border-r-2 border-r-[#0066ff] bg-[#ffe6c8]',
                  )}
                >
                  {r.no}
                </td>
                <CodeCell row={r} className={clsx(cell, 'pb-[2px] pr-0')} />
                <td className={clsx(padded, 'text-center')}>{r.type}</td>
                <td className={padded}>{r.name}</td>
                <td className={clsx(cell, 'px-[2px]', r.feature ? 'pb-1' : 'pb-0')}>
                  {r.feature?.map(f => <p key={f}>{f}</p>)}
                </td>
                <td className={padded}>{r.unit}</td>
                {r.nums.map((n, j) => (
                  <td
                    key={j}
                    className={clsx(
                      padded,
                      j === 0 ? 'text-center' : 'text-right',
                      r.selected && j === 2 && 'outline-2 -outline-offset-2 outline-[#808080]',
                    )}
                  >
                    {n}
                  </td>
                ))}
                <td className={padded}>{r.tpl}</td>
              </tr>
            )
          })}
        </tbody>
      </table>
    </div>
  )
}

/* ---------- Price composition ---------- */

const DETAIL_TABS = ['工料机显示', '单价构成', '标准换算', '换算信息', '安装费用', '特征及内容', '工程量明细', '反查图形工程量', '说明信息']
const DETAIL_COLS = ['w-[21px]', 'w-[49px]', 'w-[72px]', 'w-[131px]', 'w-[102px]', 'w-[128px]', 'w-[60px]', 'w-[74px]', 'w-[72px]', 'w-[91px]', 'w-[120px]']
const DETAIL_HEAD = ['', '序号', '费用代号', '名称', '计算基数', '基数说明', '费率(%)', '单价', '合价', '费用类别', '备注']

const DETAILS = [
  ['1', '1', 'A', '直接费', 'A1+A2+A3', '人工费+材料费+机械费', '', '5095.34', '50.95', '直接费', ''],
  ['2', '1.1', 'A1', '人工费', 'RGF', '人工费', '', '1249.82', '12.5', '人工费', ''],
  ['3', '1.2', 'A2', '材料费', 'CLF+ZCF', '材料费+主材费', '', '3845.2', '38.45', '材料费', ''],
  ['4', '1.3', 'A3', '机械费', 'JXF', '机械费', '', '0.32', '0', '机械费', ''],
  ['5', '2', 'B', '企业管理费', 'YS_RGF+YS_JXF', '基期价人工费+基期价机械费', '11.5', '143.77', '1.44', '管理费', ''],
  ['6', '3', 'C', '利润', 'YS_RGF+YS_JXF', '基期价人工费+基期价机械费', '10', '125.01', '1.25', '利润', ''],
  ['7', '', '', '工程造价', 'A+B+C', '直接费+企业管理费+利润', '', '5364.12', '53.64', '工程造价', ''],
]

function DetailGrid() {
  return (
    <div className="flex-1 border-l border-[#bfbfbf] bg-white">
      <table className={clsx('w-[920px] table-fixed border-separate border-spacing-0', GRID_FONT)}>
        <colgroup>
          {DETAIL_COLS.map((c, i) => <col key={i} className={c} />)}
        </colgroup>
        <thead>
          <tr>
            {DETAIL_HEAD.map((h, i) => <HeadCell key={i} label={h} active={i === 1} height="h-6" />)}
          </tr>
        </thead>
        <tbody className="leading-[14px]">
          {DETAILS.map((d, i) => (
            <tr key={d[0]}>
              {d.map((v, j) => (
                <td
                  key={j}
                  className={clsx(
                    'border-b border-r border-[#bfbfbf] px-[2px] pb-[2px] pt-0',
                    i < 4 ? 'h-[23px]' : 'h-[33px]',
                    j === 0 && clsx('text-center text-[11px]', UI_FONT),
                    j === 1 && 'text-center',
                    j >= 6 && j <= 8 && 'text-right',
                    (j === 5 || j === 7 || j === 8) && 'bg-[#ffffe8]',
                    i === 0 && j > 0 && 'border-b-[#808080] shadow-[inset_0_2px_#808080,inset_0_-1px_#808080]',
                    i === 0 && j === 0 && 'border-r-2 border-r-[#0066ff] bg-[#ffe6c8]',
                    i === 0 && j === 1 && 'border-r-[#808080]',
                    i === 0 && j === 10 && 'border-r-[#808080]',
                  )}
                >
                  {v}
                </td>
              ))}
            </tr>
          ))}
        </tbody>
      </table>
    </div>
  )
}

/* ---------- Work area ---------- */

const PAGE_TABS = ['造价分析', '工程概况', '取费设置', '分部分项', '措施项目', '其他项目', '人材机汇总', '费用汇总']

function PageTabs() {
  return (
    <div className="flex h-[27px] shrink-0 items-stretch border-b border-[#d4d4d4] bg-[#f5f5f5] text-black">
      {PAGE_TABS.map(t => (
        <button
          key={t}
          className={clsx('border-r border-[#c8c8c8] pl-[15px] pr-4 leading-[26px]', t === '分部分项' && 'bg-[#cce8ff] text-[#4499ff]')}
        >
          {t}
        </button>
      ))}
      <div className="ml-auto flex items-center pr-[11px]">
        <svg viewBox="0 0 14 14" className="h-[14px] w-[14px]" fill="#777">
          <path d="M9 1h4.500v12H9zM0 4.500l3-3.500 3 3.500zM0 9.500l3 3.500 3-3.500zM2.500 4h1v6h-1z" />
        </svg>
        <div className="ml-3 flex gap-2">
          <Arrow dir="up" color="#d0d0d0" />
          <Arrow dir="down" color={B} />
          <Arrow dir="left" color="#d0d0d0" />
          <Arrow dir="right" color="#d0d0d0" />
        </div>
        <svg viewBox="0 0 14 14" className="ml-[18px] h-[14px] w-[14px]">
          <path d="M1 0v14M5 0v4M9 0v3M13 0v4" stroke={B} strokeWidth="1.600" />
          <circle cx="9" cy="9.500" r="2.800" fill="none" stroke={O} strokeWidth="3" />
        </svg>
        <Caret className="ml-1 text-[#777]" />
      </div>
    </div>
  )
}

function WorkArea() {
  return (
    <main className="flex min-w-0 flex-1 flex-col bg-[#f4f4f4]">
      <MainGrid />
      <div className="mr-[3px] flex h-[14px] shrink-0 items-center bg-[#e8e8e8] px-1 text-[#666]">
        <Caret className="rotate-90" />
        <div className="ml-1 h-[10px] w-[90%] rounded-full bg-[#c0c0c0]" />
        <Caret className="ml-auto -rotate-90" />
      </div>
      <div className="flex h-8 shrink-0 items-end gap-[2px] border-b border-t-2 border-[#bfbfbf] pl-2">
        {DETAIL_TABS.map(t => (
          <button
            key={t}
            className={clsx('h-6 rounded-t-sm px-[15px]', t === '单价构成' ? 'bg-[#4499ff] font-bold text-white' : 'bg-[#bfbfbf]')}
          >
            {t}
          </button>
        ))}
      </div>
      <DetailGrid />
    </main>
  )
}

function StatusBar() {
  return (
    <footer className="flex h-[31px] shrink-0 items-center border-t-2 border-[#d9d9d9] bg-[#f4f4f4] pl-[10px]">
      <span>工程量清单项目计量规范(2013-河北)</span>
      <i className="ml-7 mr-4 h-[18px] w-px bg-[#a8b0b8]" />
      <span>河北省建设工程消耗量标准(2022)-建筑工程(一般计税)</span>
      <i className="ml-7 mr-4 h-[18px] w-px bg-[#a8b0b8]" />
      <span>建筑工程</span>
      <i className="ml-7 h-[18px] w-px bg-[#a8b0b8]" />
      <div className="ml-auto flex gap-2">
        <span>工程造价:1739280</span>
        <span>人工费:377869</span>
        <span>材料费:910354</span>
        <span>机械费:116471</span>
        <span>设备费:0</span>
        <span>主材费:20433</span>
      </div>
      <button aria-label="显示面板" className="ml-[18px] flex h-[22px] w-[22px] items-center justify-center rounded-sm border border-[#d0d0d0] bg-white">
        <svg viewBox="0 0 14 14" className="h-[14px] w-[14px]">
          <rect x="0.500" y="1.500" width="13" height="11" rx="1.500" fill="#fff" stroke="#777" />
          <path d="M1 5h12v4.500H1z" fill={B} />
        </svg>
      </button>
      <i className="mx-[9px] h-6 w-px bg-[#a8b0b8]" />
      <button aria-label="上下布局" className="flex h-[22px] w-[22px] items-center justify-center rounded-sm border border-[#d0d0d0] bg-white">
        <svg viewBox="0 0 12 12" className="h-3 w-3" fill={B}><path d="M0 0h12v7H0zM0 8.500h12V12H0z" /></svg>
      </button>
      <svg viewBox="0 0 12 12" className="ml-[10px] h-3 w-3" fill="#8c8c8c"><path d="M0 0h7v12H0zM8.500 0H12v12H8.500z" /></svg>
      <span className="ml-5">100%</span>
      <svg viewBox="0 0 12 12" className="ml-3 h-3 w-3" stroke="#555" strokeWidth="2"><path d="M0 6h12" /></svg>
      <input
        type="range"
        aria-label="缩放"
        min={0}
        max={100}
        defaultValue={34}
        className="ml-[10px] h-3 w-[106px] appearance-none bg-transparent [&::-webkit-slider-runnable-track]:h-[2px] [&::-webkit-slider-runnable-track]:bg-[#c4c4c4] [&::-webkit-slider-thumb]:-mt-[5px] [&::-webkit-slider-thumb]:h-3 [&::-webkit-slider-thumb]:w-3 [&::-webkit-slider-thumb]:appearance-none [&::-webkit-slider-thumb]:rounded-full [&::-webkit-slider-thumb]:border [&::-webkit-slider-thumb]:border-[#666] [&::-webkit-slider-thumb]:bg-white"
      />
      <svg viewBox="0 0 6 12" className="ml-3 h-3 w-1.5" stroke="#444" strokeWidth="2"><path d="M0 6h6M6 0v12" /></svg>
    </footer>
  )
}

export default function App() {
  return (
    <div className={clsx('relative flex h-screen flex-col overflow-hidden bg-[#f5f5f5] text-xs text-[#222]', UI_FONT)}>
      <header className="shrink-0 bg-linear-to-b from-white to-[#f3f3f3]">
        <TitleBar />
        <MenuBar />
      </header>
      <Toolbar />
      <div className="flex min-h-0 flex-1">
        <LeftPanel />
        <div className="flex min-w-0 flex-1 flex-col">
          <PageTabs />
          <div className="flex min-h-0 flex-1">
            <SectionPanel />
            <WorkArea />
          </div>
        </div>
      </div>
      <StatusBar />

      {/* Callout arrows drawn over the two price cells */}
      <svg viewBox="0 0 2549 1385" className="pointer-events-none absolute left-0 top-0 h-[1385px] w-[2549px]" fill="#ff5566">
        <path d="M2219 562 L2225 617 L2223 617 L2228 625 L2231 615 L2228.500 616 z" />
        <path d="M1554 762 L1482 914 L1487 917 L1471 927 L1468 908 L1474 910 z" />
      </svg>
    </div>
  )
}
